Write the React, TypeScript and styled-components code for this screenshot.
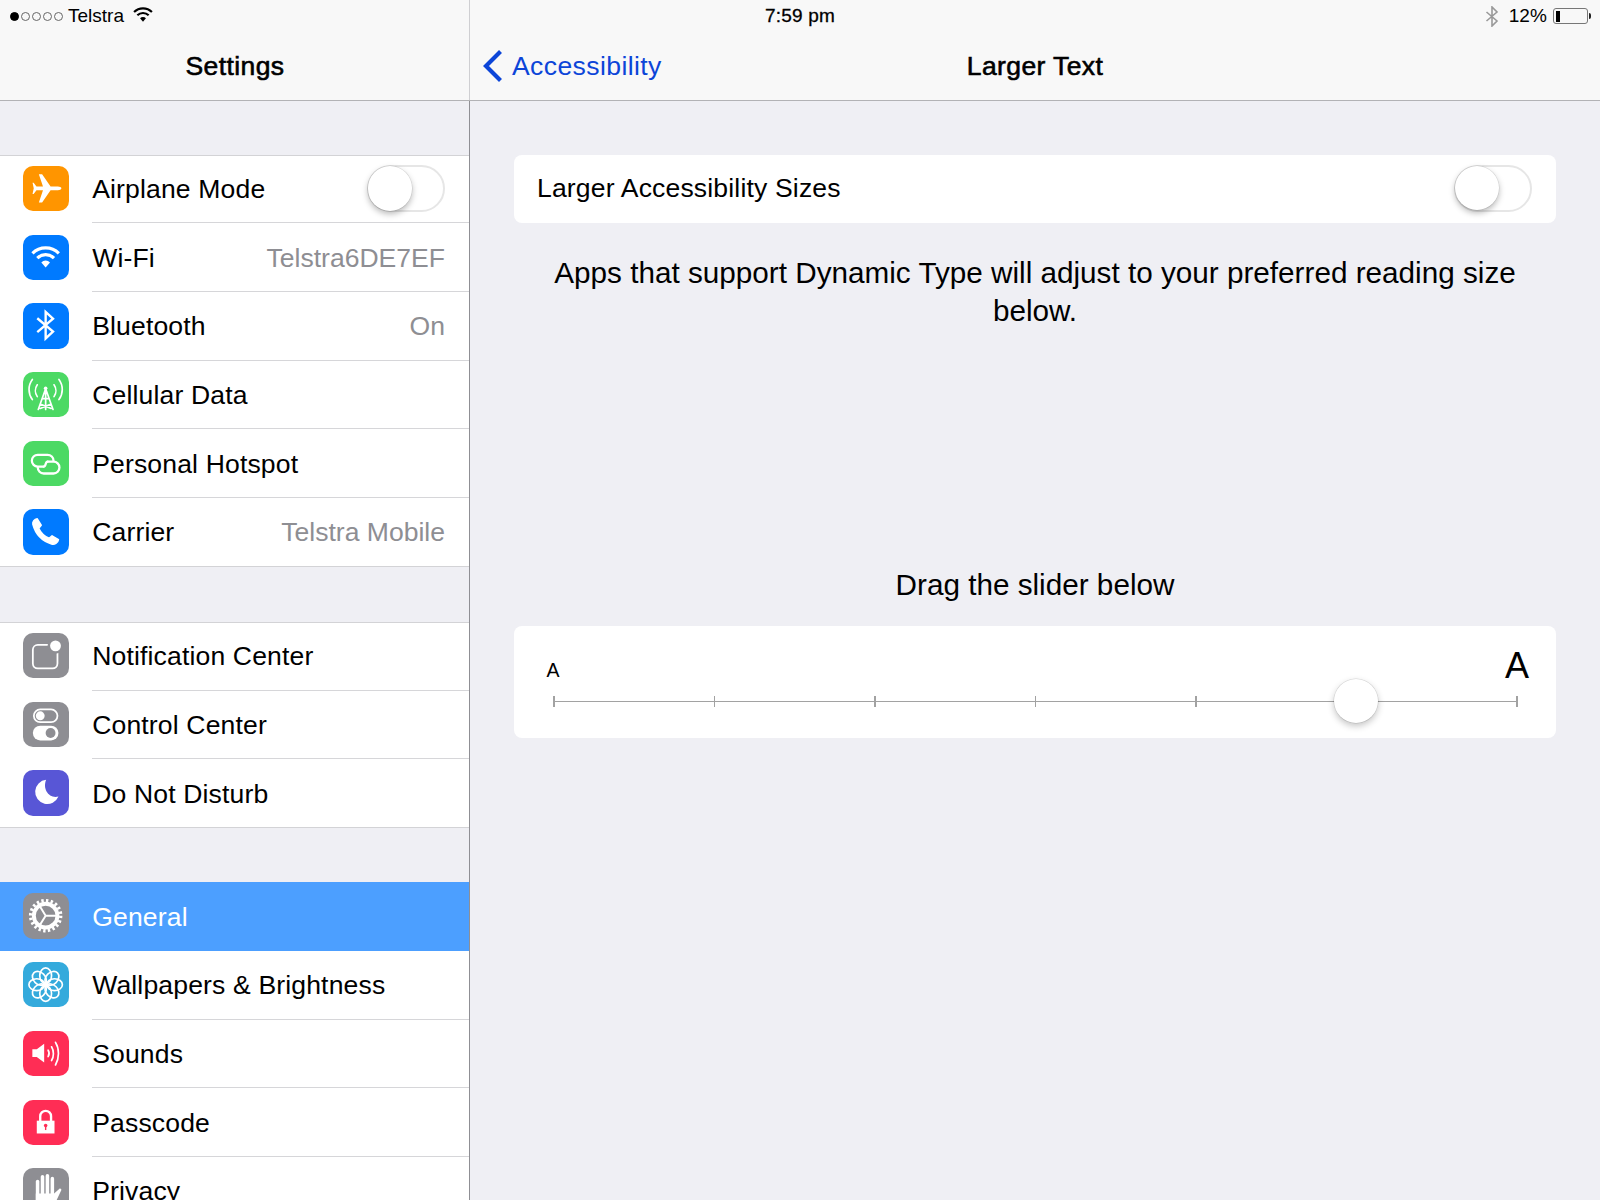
import React from "react";
import styled, { createGlobalStyle } from "styled-components";

const GlobalStyle = createGlobalStyle`
  html, body {
    margin: 0;
    padding: 0;
    background: #efeff4;
  }
  body {
    font-family: "Liberation Sans", Arial, sans-serif;
    color: #000;
  }
`;

const WifiGlyph = ({ color }: { color: string }) => (
  <g fill="none" stroke={color} strokeWidth="3.2">
    <path d="M9.6 18.6a19 19 0 0 1 26.8 0" />
    <path d="M14.5 23.5a12 12 0 0 1 17 0" />
    <path d="M18.6 27.8a6 6 0 0 1 8.8 0L23 33z" fill={color} stroke="none" />
  </g>
);

const AirplaneIcon = () => (
  <path
    fill="#fff"
    d="M39 22.7c0-1.3-1.8-2-3.6-2H28L19.4 8.3h-3.3l4.2 12.4h-6.6l-2.9-3.8H9.7l1.2 5.8-1.2 5.8h1.1l2.9-3.8h6.6L16.1 37h3.3L28 24.7h7.4c1.8 0 3.6-.7 3.6-2z"
  />
);

const BluetoothIcon = () => (
  <path
    fill="none"
    stroke="#fff"
    strokeWidth="2.4"
    d="M14.5 15.5 30.5 29 23 36V9l7.5 7-16 13.5"
  />
);

const CellularIcon = () => (
  <g fill="none" stroke="#fff" strokeWidth="1.7" strokeLinecap="round">
    <path d="M9.5 7.5c-4.5 6-4.5 14.500 0 20.500M36.500 7.500c4.500 6 4.500 14.500 0 20.500" />
    <path d="M14.500 13c-2.500 3.500-2.500 8.500 0 12M31.500 13c2.500 3.500 2.500 8.500 0 12" />
    <path d="M23 17 15.500 38M23 17 30.500 38M23 17V38M19.500 27h7M17.500 32.500 28.500 37M28.500 32.500 17.500 37" />
    <circle cx="23" cy="16.500" r="1.800" fill="#fff" stroke="none" />
  </g>
);

const HotspotIcon = () => (
  <g fill="none" stroke="#fff" strokeWidth="2.3" strokeLinecap="round">
    <path d="M21 26h-6a6 6 0 0 1 0-12h10a6 6 0 0 1 6 6" />
    <path d="M25 21h6a6 6 0 0 1 0 12H21a6 6 0 0 1-6-6" />
    <path d="M21 26c2.500 0 1.500-5 4-5" />
  </g>
);

const PhoneIcon = () => (
  <path
    fill="#fff"
    stroke="#fff"
    strokeLinejoin="round"
    strokeWidth="1.5"
    d="M14.5 10 18.5 16.5 16 19.5C18 24 21.500 27.500 26.500 29.700L29.500 27.200 36 31C35.500 34.500 32 36.500 29 35.500 19.500 32.500 12.500 25 10 15.500 9.500 13 11.500 10.500 14.500 10z"
  />
);

const NotificationIcon = () => (
  <g>
    <rect x="10" y="12" width="25" height="24" rx="5" fill="none" stroke="#fff" strokeWidth="1.8" />
    <circle cx="33" cy="13" r="8" fill="#8e8e93" />
    <circle cx="33" cy="13" r="5.5" fill="#fff" />
  </g>
);

const ControlIcon = () => (
  <g>
    <rect x="11" y="7.5" width="24" height="13" rx="6.5" fill="none" stroke="#fff" strokeWidth="1.8" />
    <circle cx="17.5" cy="14" r="4.5" fill="#fff" />
    <rect x="10" y="24" width="26" height="15" rx="7.5" fill="#fff" />
    <circle cx="28" cy="31.5" r="5" fill="#8e8e93" />
  </g>
);

const MoonIcon = () => (
  <path fill="#fff" d="M23.5 10A12.300 12.300 0 1 0 36 27C26.500 29.500 19.500 19.500 23.500 10z" />
);

const GearIcon = () => (
  <g fill="none" stroke="#fff">
    <circle cx="23" cy="23" r="15.3" strokeWidth="3.4" strokeDasharray="2.4 2.4" />
    <circle cx="23" cy="23" r="12" strokeWidth="4" />
    <path strokeWidth="2" d="M23 23 35 23M23 23 16.5 12.5M23 23 16.5 33.5" />
  </g>
);

const petalAngles = [0, 45, 90, 135, 180, 225, 270, 315];

const FlowerIcon = () => (
  <g fill="none" stroke="#fff" strokeWidth="1.7">
    {petalAngles.map((a) => (
      <ellipse key={a} cx="23" cy="14" rx="6" ry="8" transform={`rotate(${a} 23 23)`} />
    ))}
    <circle cx="23" cy="23" r="2.4" fill="#fff" stroke="none" />
  </g>
);

const SoundIcon = () => (
  <g>
    <path fill="#fff" d="M9.500 18.500h4.500l7.500-5.500v19l-7.500-5.500H9.500z" />
    <g fill="none" stroke="#fff" strokeWidth="1.7" strokeLinecap="round">
      <path d="M25.500 19.500c1.300 2 1.300 4.500 0 6.500" />
      <path d="M29 16c2.500 4 2.500 10 0 14" />
      <path d="M33 11.500c4 6.500 4 16 0 23" />
    </g>
  </g>
);

const LockIcon = () => (
  <g>
    <path fill="none" stroke="#fff" strokeWidth="2.4" d="M17.500 21.500V16.500a5.500 5.500 0 0 1 11 0V21.500" />
    <rect x="14" y="21" width="18" height="13" fill="#fff" />
    <circle cx="23" cy="26" r="1.8" fill="#ff2d55" />
    <rect x="22.3" y="26" width="1.4" height="4.5" fill="#ff2d55" />
  </g>
);

const HandIcon = () => (
  <g fill="#fff">
    <rect x="13" y="12" width="3.6" height="24" rx="1.8" />
    <rect x="18" y="7" width="3.6" height="28" rx="1.8" />
    <rect x="23" y="6" width="3.6" height="28" rx="1.8" />
    <rect x="28" y="9" width="3.6" height="26" rx="1.8" />
    <path d="M13 26h18.600l6-5.500 1.500 1.500-7 15H13z" />
  </g>
);

type Item = {
  label: string;
  bg: string;
  glyph: React.ReactNode;
  value?: string;
  toggle?: boolean;
  selected?: boolean;
};

const networkItems: Item[] = [
  { label: "Airplane Mode", bg: "#ff9500", glyph: <AirplaneIcon />, toggle: true },
  { label: "Wi-Fi", bg: "#007aff", glyph: <WifiGlyph color="#fff" />, value: "Telstra6DE7EF" },
  { label: "Bluetooth", bg: "#007aff", glyph: <BluetoothIcon />, value: "On" },
  { label: "Cellular Data", bg: "#4cd964", glyph: <CellularIcon /> },
  { label: "Personal Hotspot", bg: "#4cd964", glyph: <HotspotIcon /> },
  { label: "Carrier", bg: "#007aff", glyph: <PhoneIcon />, value: "Telstra Mobile" },
];

const systemItems: Item[] = [
  { label: "Notification Center", bg: "#8e8e93", glyph: <NotificationIcon /> },
  { label: "Control Center", bg: "#8e8e93", glyph: <ControlIcon /> },
  { label: "Do Not Disturb", bg: "#5856d6", glyph: <MoonIcon /> },
];

const generalItems: Item[] = [
  { label: "General", bg: "#8e8e93", glyph: <GearIcon />, selected: true },
  { label: "Wallpapers & Brightness", bg: "#34aadc", glyph: <FlowerIcon /> },
  { label: "Sounds", bg: "#ff2d55", glyph: <SoundIcon /> },
  { label: "Passcode", bg: "#ff2d55", glyph: <LockIcon /> },
  { label: "Privacy", bg: "#8e8e93", glyph: <HandIcon /> },
];

const signalDots = [true, false, false, false, false];
const sliderStops = [0, 1, 2, 3, 4, 5, 6];
const sliderValue = 5;

const SettingsGroup = ({ items, flush, gap }: { items: Item[]; flush?: boolean; gap?: string }) => (
  <Group $flush={flush} $gap={gap}>
    {items.map((item) => (
      <Row key={item.label} $selected={item.selected}>
        <IconBox $bg={item.bg}>
          <svg viewBox="0 0 46 46">{item.glyph}</svg>
        </IconBox>
        <RowBody $selected={item.selected}>
          <RowLabel $selected={item.selected}>{item.label}</RowLabel>
          {item.value && <RowValue>{item.value}</RowValue>}
          {item.toggle && <Toggle />}
        </RowBody>
      </Row>
    ))}
  </Group>
);

const Toggle = () => (
  <ToggleTrack>
    <ToggleKnob />
  </ToggleTrack>
);

const App = () => {
  return (
    <Page>
      <GlobalStyle />
      <StatusBar>
        <StatusLeft>
          <SignalDots>
            {signalDots.map((on, i) => (
              <SignalDot key={i} $on={on} />
            ))}
          </SignalDots>
          <span>Telstra</span>
          <svg width="20" height="16" viewBox="8 11 30 24">
            <WifiGlyph color="#000" />
          </svg>
        </StatusLeft>
        <StatusTime>7:59 pm</StatusTime>
        <StatusRight>
          <svg width="14" height="21" viewBox="0 0 14 21">
            <path fill="none" stroke="#999" strokeWidth="1.6" d="M1.500 6 12 15 7 20V1l5 5L1.500 15" />
          </svg>
          <BatteryLabel>12 %</BatteryLabel>
          <Battery>
            <BatteryFill />
          </Battery>
        </StatusRight>
      </StatusBar>

      <Sidebar>
        <SideHeader>
          <NavTitle>Settings</NavTitle>
        </SideHeader>
        <SideList>
          <SettingsGroup items={networkItems} gap="55.4px" />
          <SettingsGroup items={systemItems} gap="54.3px" />
          <SettingsGroup items={generalItems} flush />
        </SideList>
      </Sidebar>

      <Detail>
        <DetailHeader>
          <BackLink>
            <svg width="20" height="32" viewBox="0 0 20 32">
              <path fill="none" stroke="#0c45d8" strokeWidth="4.2" d="M17.500 1.500 3 16l14.500 14.500" />
            </svg>
            <span>Accessibility</span>
          </BackLink>
          <NavTitle>Larger Text</NavTitle>
        </DetailHeader>
        <DetailBody>
          <SwitchCard>
            <SwitchLabel>Larger Accessibility Sizes</SwitchLabel>
            <Toggle />
          </SwitchCard>
          <Description>
            Apps that support Dynamic Type will adjust to your preferred reading size below.
          </Description>
          <SliderHint>Drag the slider below</SliderHint>
          <SliderCard>
            <SliderLabels>
              <SmallA>A</SmallA>
              <LargeA>A</LargeA>
            </SliderLabels>
            <SliderTrack>
              {sliderStops.map((s) => (
                <SliderTick key={s} />
              ))}
              <SliderKnob style={{ left: `${(sliderValue / (sliderStops.length - 1)) * 100}%` }} />
            </SliderTrack>
          </SliderCard>
        </DetailBody>
      </Detail>
    </Page>
  );
};

const Page = styled.div`
  position: relative;
  display: flex;
  width: 1600px;
  height: 1200px;
  overflow: hidden;
  background: #efeff4;
`;

const StatusBar = styled.div`
  position: absolute;
  z-index: 2;
  top: 0;
  left: 0;
  right: 0;
  height: 32px;
  display: grid;
  grid-template-columns: 1fr auto 1fr;
  align-items: center;
  font-size: 19px;
`;

const StatusLeft = styled.div`
  display: flex;
  align-items: center;
  padding-left: 10px;

  span {
    margin-left: 5px;
  }

  svg {
    margin-left: 9px;
    margin-top: -2px;
  }
`;

const SignalDots = styled.div`
  display: flex;
  align-items: center;
  gap: 2px;
`;

const SignalDot = styled.i<{ $on: boolean }>`
  display: block;
  width: 9px;
  height: 9px;
  box-sizing: border-box;
  border-radius: 50%;
  border: 1px solid ${(p) => (p.$on ? "#000" : "#666")};
  background: ${(p) => (p.$on ? "#000" : "transparent")};
`;

const StatusTime = styled.div`
  letter-spacing: 0.2px;
  -webkit-text-stroke: 0.3px #000;
`;

const StatusRight = styled.div`
  display: flex;
  align-items: center;
  justify-content: flex-end;
  padding-right: 8px;
`;

const BatteryLabel = styled.span`
  margin-left: 10px;
  word-spacing: -5px;
`;

const Battery = styled.div`
  position: relative;
  margin-left: 6px;
  margin-right: 4px;
  width: 35px;
  height: 16px;
  box-sizing: border-box;
  border: 1px solid #777;
  border-radius: 3px;
  padding: 1.5px;

  &::after {
    content: "";
    position: absolute;
    right: -4px;
    top: 4px;
    width: 2.5px;
    height: 6px;
    background: #222;
    border-radius: 0 2px 2px 0;
  }
`;

const BatteryFill = styled.div`
  width: 4px;
  height: 100%;
  background: #000;
`;

const Sidebar = styled.aside`
  width: 470px;
  flex: none;
  display: flex;
  flex-direction: column;
  box-sizing: border-box;
  border-right: 1px solid #8f8f94;
`;

const HeaderBase = styled.header`
  height: 101px;
  box-sizing: border-box;
  padding-top: 32px;
  background: #f8f8f8;
  border-bottom: 1px solid #b2b2b5;
  display: flex;
  align-items: center;
  justify-content: center;
  flex: none;
`;

const SideHeader = styled(HeaderBase)`
  margin-right: -1px;
  box-shadow: inset -1px 0 0 #cfcfd2;
`;

const NavTitle = styled.h1`
  margin: 0;
  font-size: 26.5px;
  font-weight: 400;
  letter-spacing: 0.4px;
  -webkit-text-stroke: 0.6px #000;
`;

const SideList = styled.div`
  padding-top: 54px;
`;

const Group = styled.section<{ $flush?: boolean; $gap?: string }>`
  overflow: hidden;
  background: #fff;
  margin-bottom: ${(p) => p.$gap ?? 0};
  border-top: ${(p) => (p.$flush ? "none" : "1px solid #d3d3d6")};
  border-bottom: ${(p) => (p.$flush ? "none" : "1px solid #d3d3d6")};

  & > *:first-child {
    margin-top: ${(p) => (p.$flush ? 0 : "-1.3px")};
  }

  & > *:last-child {
    margin-bottom: ${(p) => (p.$flush ? 0 : "-1px")};
  }
`;

const Row = styled.div<{ $selected?: boolean }>`
  height: 68.7px;
  display: flex;
  align-items: stretch;
  padding-left: 23.3px;
  background: ${(p) => (p.$selected ? "#4c9fff" : "#fff")};
`;

const IconBox = styled.div<{ $bg: string }>`
  flex: none;
  width: 45.3px;
  height: 45.3px;
  margin-top: 11.2px;
  border-radius: 10px;
  background: ${(p) => p.$bg};

  svg {
    display: block;
    width: 100%;
    height: 100%;
  }
`;

const RowBody = styled.div<{ $selected?: boolean }>`
  flex: 1;
  min-width: 0;
  margin-left: 23.6px;
  padding: 2px 24px 0 0;
  display: flex;
  align-items: center;
  justify-content: space-between;
  box-sizing: border-box;
  border-bottom: 1px solid ${(p) => (p.$selected ? "transparent" : "#d6d6d9")};

  ${Row}:last-child > & {
    border-bottom-color: transparent;
  }
`;

const RowLabel = styled.span<{ $selected?: boolean }>`
  font-size: 26.56px;
  letter-spacing: 0.15px;
  color: ${(p) => (p.$selected ? "#fff" : "#000")};
`;

const RowValue = styled.span`
  font-size: 26.56px;
  color: #8e8e93;
`;

const ToggleTrack = styled.div`
  position: relative;
  flex: none;
  width: 78px;
  height: 47px;
  margin-top: -2px;
  box-sizing: border-box;
  border: 2px solid #e6e6e6;
  border-radius: 24px;
  background: #fff;
`;

const ToggleKnob = styled.div`
  position: absolute;
  left: -1.5px;
  top: -1px;
  width: 44.5px;
  height: 44.5px;
  border-radius: 50%;
  background: #fff;
  box-shadow: 0 0 0 0.5px rgba(0, 0, 0, 0.12), 0 3px 6px rgba(0, 0, 0, 0.28);
`;

const Detail = styled.main`
  flex: 1;
  min-width: 0;
  display: flex;
  flex-direction: column;
`;

const DetailHeader = styled(HeaderBase)`
  position: relative;
`;

const BackLink = styled.a`
  position: absolute;
  left: 13px;
  top: 50px;
  display: flex;
  align-items: center;
  gap: 9px;
  font-size: 26.56px;
  letter-spacing: 0.4px;
  color: #0c45d8;
`;

const DetailBody = styled.div`
  padding: 54px 44px 0;
`;

const Card = styled.div`
  background: #fff;
  border-radius: 8px;
`;

const SwitchCard = styled(Card)`
  height: 68px;
  display: flex;
  align-items: center;
  justify-content: space-between;
  padding: 0 24px 0 23px;
  box-sizing: border-box;
  font-size: 26.56px;
`;

const SwitchLabel = styled.span`
  letter-spacing: 0.16px;
  margin-top: -2px;
`;

const Description = styled.p`
  margin: 31px 30px 0;
  font-size: 29.7px;
  line-height: 37.5px;
  text-align: center;
`;

const SliderHint = styled.div`
  margin-top: 237px;
  font-size: 29.7px;
  line-height: 37px;
  text-align: center;
`;

const SliderCard = styled(Card)`
  margin-top: 23px;
  height: 112px;
  box-sizing: border-box;
  padding: 20px 38px 0 39px;
`;

const SliderLabels = styled.div`
  display: flex;
  align-items: flex-end;
  justify-content: space-between;
  height: 34px;
  margin: 0 -11px 0 -6.5px;
`;

const SmallA = styled.span`
  font-size: 19.5px;
  line-height: 19px;
`;

const LargeA = styled.span`
  font-size: 36px;
  line-height: 29px;
`;

const SliderTrack = styled.div`
  position: relative;
  margin-top: 16px;
  height: 11px;
  display: flex;
  align-items: stretch;
  justify-content: space-between;

  &::before {
    content: "";
    position: absolute;
    left: 0;
    right: 0;
    top: 5px;
    height: 1px;
    background: #a2a2a2;
  }
`;

const SliderTick = styled.i`
  display: block;
  width: 1.5px;
  background: #a2a2a2;
`;

const SliderKnob = styled.div`
  position: absolute;
  top: 4.5px;
  width: 44px;
  height: 44px;
  margin: -22px 0 0 -23px;
  border-radius: 50%;
  background: #fff;
  box-shadow: 0 0 0 0.5px rgba(0, 0, 0, 0.14), 0 3px 7px rgba(0, 0, 0, 0.24);
`;

export default App;
